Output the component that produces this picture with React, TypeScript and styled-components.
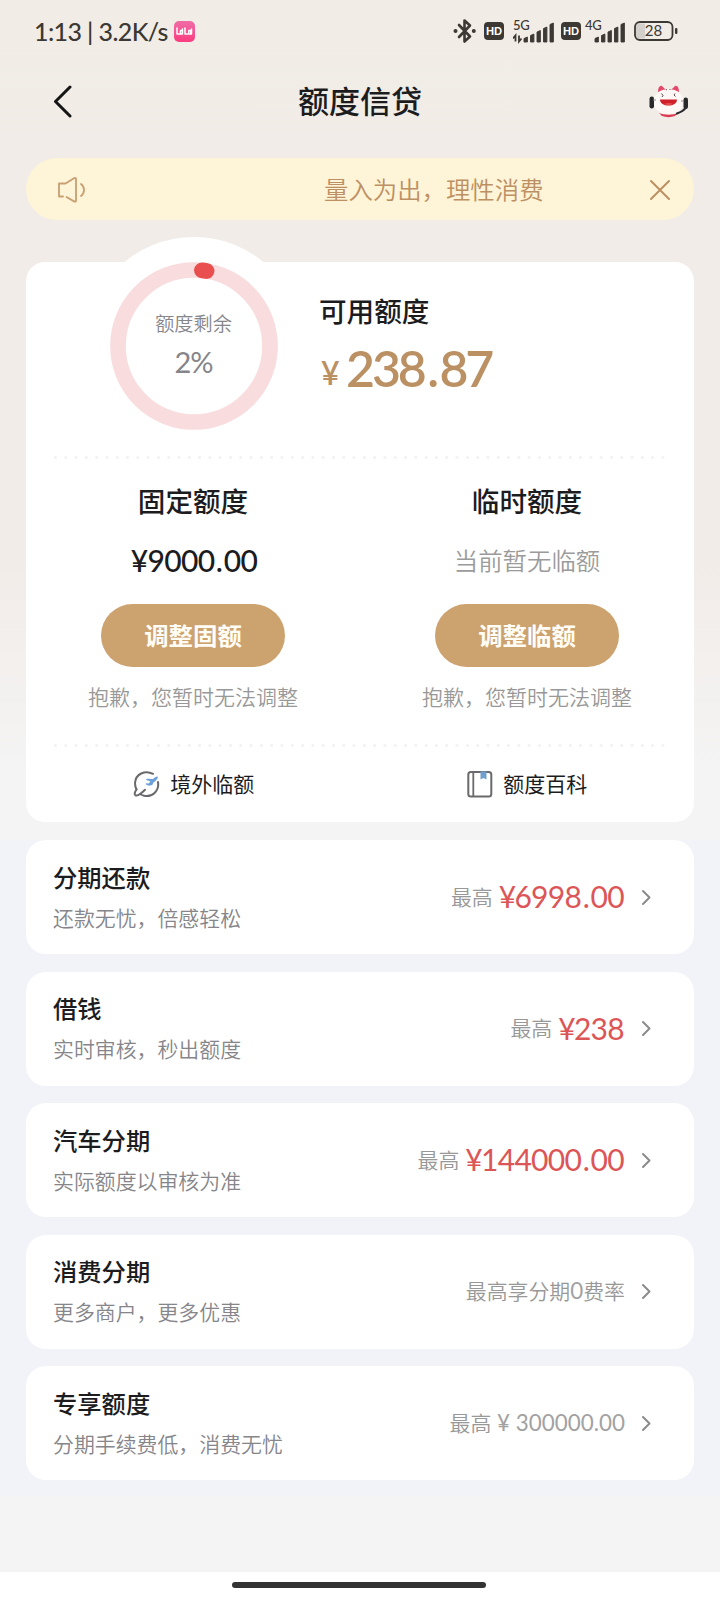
import React from "react";
import styled, { createGlobalStyle } from "styled-components";

const GlobalStyle = createGlobalStyle`
  * { box-sizing: border-box; }
  body {
    margin: 0;
    font-family: Lato, "Noto Sans CJK SC", sans-serif;
    color: #1c1c1e;
    background: #fff;
  }
  svg { display: block; flex: none; }
`;

const Page = styled.div`
  width: 720px;
  height: 1600px;
  display: flex;
  flex-direction: column;
  overflow: hidden;
  background: #f4f4f4;
`;

const Hero = styled.div`
  height: 840px;
  flex: none;
  padding-bottom: 18px;
  background: linear-gradient(180deg, #f1ede6 0, #f1ece7 160px, #f2ece8 560px, #f4f4f4 770px);
`;

const StatusBar = styled.div`
  height: 62px;
  display: flex;
  align-items: center;
  padding: 0 42px 0 34px;
  color: #3c3833;
`;

const Clock = styled.span`
  font-size: 25px;
  line-height: 30px;
  letter-spacing: -0.6px;
  font-weight: 500;
  white-space: pre;
`;

const AppBadge = styled.div`
  width: 21px;
  height: 21px;
  margin-left: 6px;
  border-radius: 5px;
  background: linear-gradient(180deg, #ee6ca6, #fb3d80);
`;

const StatusIcons = styled.div`
  display: flex;
  align-items: center;
  margin-left: auto;
`;

const HdBadge = styled.div<{ $left: number; $right: number }>`
  width: 20px;
  height: 18px;
  margin: 0 ${(p) => p.$right}px 0 ${(p) => p.$left}px;
  border-radius: 4px;
  background: #3c3833;
  color: #fff;
  font: 900 10.5px/18px Lato, sans-serif;
  text-align: center;
`;

const NavBar = styled.header`
  height: 96px;
  display: flex;
  align-items: center;
  justify-content: space-between;
  padding: 0 31px 18px 52px;
`;

const NavSide = styled.div<{ $end?: boolean }>`
  width: ${(p) => (p.$end ? 101 : 80)}px;
  display: flex;
  justify-content: ${(p) => (p.$end ? "flex-end" : "flex-start")};
`;

const NavTitle = styled.h1`
  margin: 0;
  flex: 1;
  text-align: center;
  font-size: 31px;
  line-height: 44px;
  font-weight: 500;
`;

const Notice = styled.div`
  width: 668px;
  height: 62px;
  margin: 0 26px 42px;
  padding: 1px 23px 0 31px;
  display: flex;
  align-items: center;
  border-radius: 31px;
  background: #fef4d7;
  color: #bd9063;
`;

const NoticeText = styled.div`
  margin: 1px auto 0 238px;
  font-size: 24.4px;
  line-height: 36px;
  font-weight: 350;
`;

const LimitCard = styled.section`
  width: 668px;
  height: 560px;
  margin: 0 26px;
  border-radius: 19px;
  background: #fff;
`;

const Summary = styled.div`
  height: 194px;
  display: flex;
  align-items: flex-start;
`;

const GaugeHalo = styled.div`
  width: 218px;
  height: 218px;
  margin: -25px 16.5px 0 58.5px;
  padding: 25px;
  border-radius: 50%;
  background: #fff;
  display: grid;
`;

const GaugeRing = styled.svg`
  grid-area: 1 / 1;
`;

const GaugeLabel = styled.div`
  grid-area: 1 / 1;
  display: flex;
  flex-direction: column;
  align-items: center;
  padding-top: 47px;
  color: #85858a;
  font-size: 19.2px;
  line-height: 30px;
  font-weight: 350;
`;

const GaugeValue = styled.span`
  margin-top: 7px;
  font-size: 29px;
  line-height: 32px;
  font-weight: 400;
  letter-spacing: -1px;
`;

const Available = styled.div`
  padding-top: 30px;
`;

const SectionTitle = styled.h2`
  margin: 0;
  font-size: 27.6px;
  line-height: 40px;
  font-weight: 500;
`;

const AvailableAmount = styled.div`
  height: 60px;
  margin-top: 6px;
  padding-left: 2px;
  display: flex;
  align-items: baseline;
  color: #bb9164;
  font-weight: 600;
  font-size: 50px;
  line-height: 60px;
  letter-spacing: -3.1px;
`;

const Currency = styled.span`
  width: 25px;
  padding-bottom: 2px;
  font-size: 32px;
  font-weight: 600;
  transform: translateY(-2px);
`;

const Yen = styled.span`
  margin-right: -1px;
`;

const Point = styled.span<{ $gap: number }>`
  margin: 0 ${(p) => p.$gap}px;
`;

const DotRule = styled.div`
  width: 616px;
  height: 3px;
  margin: 0 auto;
  background: radial-gradient(circle at 1.5px 1.5px, #f1f1f1 1px, transparent 1.8px) 2px 0 / 10.3px 3px repeat-x;
`;

const Columns = styled.div`
  height: 285px;
  display: flex;
`;

const LimitColumn = styled.div`
  flex: 1;
  display: flex;
  flex-direction: column;
  align-items: center;
  padding-top: 23px;
`;

const LimitValue = styled.div<{ $empty?: boolean }>`
  margin: 18px 0 24px;
  padding: ${(p) => (p.$empty ? "1px 0 0" : "0 0 1px 2px")};
  height: 40px;
  line-height: 40px;
  font-size: ${(p) => (p.$empty ? 24.4 : 30)}px;
  color: ${(p) => (p.$empty ? "#9b9b9b" : "#1c1c1e")};
  letter-spacing: ${(p) => (p.$empty ? 0 : -0.7)}px;
  font-weight: ${(p) => (p.$empty ? 350 : 500)};
`;

const AdjustButton = styled.button`
  width: 184px;
  height: 63px;
  margin: 0;
  padding: 0 0 2px;
  border: 0;
  border-radius: 32px;
  background: #cca26f;
  color: #fffdf6;
  font: 700 24.4px/60px "Noto Sans CJK SC", sans-serif;
`;

const LimitNote = styled.p`
  margin: 15px 0 0;
  font-size: 21px;
  line-height: 30px;
  font-weight: 350;
  color: #989898;
`;

const Links = styled.div`
  height: 75px;
  padding: 0 0 2px 1px;
  display: flex;
`;

const LinkItem = styled.div`
  flex: 1;
  display: flex;
  align-items: center;
  justify-content: center;
  gap: 10px;
  font-size: 21px;
  line-height: 30px;
`;

const Products = styled.div`
  height: 656px;
  flex: none;
  padding: 0 26px;
  display: flex;
  flex-direction: column;
  gap: 17.5px;
  background: #f2f3f8;
`;

const ProductCard = styled.div`
  height: 114px;
  padding: 0 43px 1px 27px;
  display: flex;
  align-items: center;
  border-radius: 20px;
  background: #fff;
`;

const ProductText = styled.div`
  flex: 1;
`;

const ProductName = styled.div`
  font-size: 24.3px;
  line-height: 36px;
  font-weight: 500;
`;

const ProductDesc = styled.div`
  margin-top: 6px;
  font-size: 20.9px;
  line-height: 32px;
  font-weight: 350;
  color: #85858a;
`;

const ProductHint = styled.div`
  display: flex;
  align-items: center;
  margin-right: 16px;
  font-size: 20.9px;
  line-height: 36px;
  font-weight: 350;
  color: #989898;
  white-space: pre;
`;

const ProductAmount = styled.span`
  margin: 0 1px 1px 6px;
  font-size: 30px;
  font-weight: 400;
  letter-spacing: -0.7px;
  color: #dc5658;
`;

const HintDigits = styled.span`
  font-size: 22.4px;
  font-weight: 400;
  color: #a2a2a2;
`;

const HomeArea = styled.footer`
  height: 28px;
  margin-top: auto;
  padding: 10px 2px 0 0;
  background: #fff;
`;

const HomeBar = styled.div`
  width: 254px;
  height: 6px;
  margin: 0 auto;
  border-radius: 3px;
  background: #333;
`;

function Bluetooth() {
  return (
    <svg width="24" height="26" viewBox="0 0 24 26" fill="none" stroke="#3c3833" strokeWidth="2.600" strokeLinejoin="round" strokeLinecap="round">
      <path d="M6 7l11 11.500-5.500 5V2.500l5.500 5L6 19" />
      <circle cx="2.500" cy="13" r="2" fill="#3c3833" stroke="none" />
      <circle cx="20.800" cy="13" r="2" fill="#3c3833" stroke="none" />
    </svg>
  );
}

function Signal({ label, offset, data }: { label: string; offset: number; data?: boolean }) {
  const bars = [5, 8, 11.5, 15, 19];
  return (
    <svg width={offset + 31} height="26" viewBox={`0 0 ${offset + 31} 26`} fill="#3c3833">
      <text x="0" y="11.500" fontSize="13" fontWeight="500" fontFamily="Lato, sans-serif" letterSpacing="-0.4">{label}</text>
      {data && <path d="M2.500 23.500v-6L0 20.500M6 17.500v6l2.500-3" fill="none" stroke="#3c3833" strokeWidth="1.800" />}
      {bars.map((h, i) => (
        <path key={h} d={`M${offset + i * 6.5} ${24 - h + 1.5}l3.400-1.500V24h-3.400z`} stroke="#3c3833" strokeWidth="0.900" strokeLinejoin="round" />
      ))}
    </svg>
  );
}

function Battery() {
  return (
    <svg width="44" height="20" viewBox="0 0 44 20">
      <path d="M5 2.500h6v15H5a3 3 0 0 1-3-3v-9a3 3 0 0 1 3-3z" fill="#d3cfca" />
      <rect x="1" y="1" width="37.500" height="18" rx="5" fill="none" stroke="#3c3833" strokeWidth="1.800" />
      <rect x="41" y="7" width="2.400" height="6" rx="1" fill="#3c3833" />
      <text x="19.500" y="15.200" fontSize="15" textAnchor="middle" fill="#3c3833" fontFamily="Lato, sans-serif">28</text>
    </svg>
  );
}

function Mascot() {
  return (
    <svg width="40" height="34" viewBox="0 0 40 34">
      <path d="M9 8c0-5 2-7 4-6l4 4zM30 8c0-5-2-7-4-6l-4 4z" fill="#e4486a" />
      <path d="M5 15C7 2 32 2 34 15c2 9-5 15-14.500 15S3 24 5 15z" fill="#fdf8f5" />
      <path d="M10 29c5 2.200 14 2.200 19 0l-3 3c-4 1.500-9 1.500-13 0z" fill="#dc3b54" />
      <path d="M11 15.500h17c0 8-17 8-17 0z" fill="#cf1f2b" />
      <path d="M15 20c3-1.200 6-1.200 9 0-3 1.400-6 1.400-9 0z" fill="#e2504f" />
      <path d="M12.500 9.500l1.500 2-1 1.500M26 9.500l-1 1.500 1.500 1.500M17 5.500l1 .5M20.500 5.500h1" fill="none" stroke="#493436" strokeWidth="0.900" />
      <rect x="0.500" y="12.500" width="4.500" height="12" rx="2.200" fill="#29292b" />
      <rect x="34.500" y="13.500" width="4.500" height="11.500" rx="2.200" fill="#29292b" />
      <path d="M36.500 24c-2 3-5 4.200-8.500 5.500" fill="none" stroke="#29292b" strokeWidth="2.200" strokeLinecap="round" />
      <path d="M4 16h3M32 17h3" stroke="#8f8784" />
    </svg>
  );
}

function Speaker() {
  return (
    <svg width="29" height="28" viewBox="0 0 29 28" fill="none" stroke="#c79f72" strokeWidth="1.800" strokeLinejoin="round" strokeLinecap="round">
      <path d="M6 20.500H2V7.500h6.500l9-5.500c.8-.4 1.500 0 1.500.8v22c0 .8-.7 1.100-1.500.8l-8-4.600" />
      <path d="M24 8c4 3 4 9 0 12" />
    </svg>
  );
}

function Planet() {
  return (
    <svg width="27" height="28" viewBox="0 0 27 28" fill="none">
      <path d="M20 3.800C12-.3 2.500 4 2 13c0 2.500.5 4.500 1.500 6.500M25 12c1.500 9-6 15.500-14 13.700-1.800-.4-3-1-4-1.700" stroke="#6a6a6d" strokeWidth="2" strokeLinecap="round" />
      <path d="M3.500 19.500c-2 2.500-2.500 5.500-.8 6 2 .5 6-2.500 9.300-5.800" stroke="#6a6a6d" strokeWidth="2" strokeLinecap="round" />
      <path d="M24.500 6.500c-1.300-.3-2.700.7-4.500 2.600l-6-.3-1.200 1 4.700 1.700-2 2-2.300-.2-.7.900 3.500 1.500 3.300-.8 1-2.200C22.500 11 26 8 24.500 6.500z" fill="#6d9fd8" />
    </svg>
  );
}

function Book() {
  return (
    <svg width="26" height="28" viewBox="0 0 26 28" fill="none">
      <rect x="1.300" y="2" width="23" height="24.500" rx="2.500" stroke="#6a6a6d" strokeWidth="2" />
      <path d="M6.300 2v24.500" stroke="#6a6a6d" strokeWidth="1.800" />
      <path d="M13.500 1.500h6v8l-3-1.600-3 1.600z" fill="#709fcd" />
    </svg>
  );
}

function Gauge({ percent }: { percent: number }) {
  return (
    <GaugeRing width="168" height="168" viewBox="0 0 168 168" fill="none">
      <circle cx="84" cy="84" r="76" stroke="#f9dcdd" strokeWidth="15.700" />
      <circle
        cx="84"
        cy="84"
        r="76"
        stroke="#e94f4e"
        strokeWidth="15.700"
        strokeLinecap="round"
        pathLength="100"
        strokeDasharray={`${percent / 2} 100`}
        transform="rotate(-84 84 84)"
      />
    </GaugeRing>
  );
}

/* Splits an amount so the decimal point can breathe between tight digits. */
function Digits({ value, gap }: { value: string; gap: number }) {
  const [whole, cents] = value.split(".");
  return (
    <span>
      {whole}
      {cents && <><Point $gap={gap}>.</Point>{cents}</>}
    </span>
  );
}

const products = [
  { name: "分期还款", desc: "还款无忧，倍感轻松", amount: "6998.00" },
  { name: "借钱", desc: "实时审核，秒出额度", amount: "238" },
  { name: "汽车分期", desc: "实际额度以审核为准", amount: "144000.00" },
  { name: "消费分期", desc: "更多商户，更多优惠", hint: <>最高享分期<HintDigits>0</HintDigits>费率</> },
  { name: "专享额度", desc: "分期手续费低，消费无忧", hint: <>最高<HintDigits> ¥ 300000.00</HintDigits></> },
];

export default function App() {
  return (
    <>
      <GlobalStyle />
      <Page>
        <Hero>
          <StatusBar>
            <Clock>1:13 | 3.2K/s</Clock>
            <AppBadge>
              <svg width="21" height="21" viewBox="0 0 21 21" fill="none" stroke="#fff" strokeWidth="1.500" strokeLinecap="round" strokeLinejoin="round">
                <path d="M3 7v6h2.500M6.500 9.500h2v3.500h-2zM8.500 8v5M11 7v6h2.500M14.800 9.500h2v3.500h-2zM17.500 8v5" />
              </svg>
            </AppBadge>
            <StatusIcons>
              <Bluetooth />
              <HdBadge $left={7} $right={9}>HD</HdBadge>
              <Signal label="5G" offset={11} data />
              <HdBadge $left={6} $right={4}>HD</HdBadge>
              <Signal label="4G" offset={10} />
              <svg width="8" height="1" />
              <Battery />
            </StatusIcons>
          </StatusBar>
          <NavBar>
            <NavSide>
              <svg width="22" height="34" viewBox="0 0 22 34" fill="none" stroke="#151515" strokeWidth="3" strokeLinecap="round" strokeLinejoin="round">
                <path d="M18 3L3.500 17.500 18 32" />
              </svg>
            </NavSide>
            <NavTitle>额度信贷</NavTitle>
            <NavSide $end><Mascot /></NavSide>
          </NavBar>
          <Notice>
            <Speaker />
            <NoticeText>量入为出，理性消费</NoticeText>
            <svg width="22" height="22" viewBox="0 0 22 22" stroke="#bd9063" strokeWidth="2" strokeLinecap="round">
              <path d="M2 2l18 18M20 2L2 20" />
            </svg>
          </Notice>
          <LimitCard>
            <Summary>
              <GaugeHalo>
                <Gauge percent={2} />
                <GaugeLabel>
                  额度剩余
                  <GaugeValue>2%</GaugeValue>
                </GaugeLabel>
              </GaugeHalo>
              <Available>
                <SectionTitle>可用额度</SectionTitle>
                <AvailableAmount>
                  <Currency>¥</Currency>
                  <Digits value="238.87" gap={3.5} />
                </AvailableAmount>
              </Available>
            </Summary>
            <DotRule />
            <Columns>
              <LimitColumn>
                <SectionTitle>固定额度</SectionTitle>
                <LimitValue>¥<Digits value="9000.00" gap={1.5} /></LimitValue>
                <AdjustButton>调整固额</AdjustButton>
                <LimitNote>抱歉，您暂时无法调整</LimitNote>
              </LimitColumn>
              <LimitColumn>
                <SectionTitle>临时额度</SectionTitle>
                <LimitValue $empty>当前暂无临额</LimitValue>
                <AdjustButton>调整临额</AdjustButton>
                <LimitNote>抱歉，您暂时无法调整</LimitNote>
              </LimitColumn>
            </Columns>
            <DotRule />
            <Links>
              <LinkItem><Planet />境外临额</LinkItem>
              <LinkItem><Book />额度百科</LinkItem>
            </Links>
          </LimitCard>
        </Hero>
        <Products>
          {products.map((p) => (
            <ProductCard key={p.name}>
              <ProductText>
                <ProductName>{p.name}</ProductName>
                <ProductDesc>{p.desc}</ProductDesc>
              </ProductText>
              <ProductHint>
                {p.amount ? (
                  <>最高<ProductAmount><Yen>¥</Yen><Digits value={p.amount} gap={1.5} /></ProductAmount></>
                ) : (
                  <span>{p.hint}</span>
                )}
              </ProductHint>
              <svg width="10" height="18" viewBox="0 0 10 18" fill="none" stroke="#8b8b8e" strokeWidth="2" strokeLinecap="round" strokeLinejoin="round">
                <path d="M2 3l6.500 6.500L2 16" />
              </svg>
            </ProductCard>
          ))}
        </Products>
        <HomeArea><HomeBar /></HomeArea>
      </Page>
    </>
  );
}
